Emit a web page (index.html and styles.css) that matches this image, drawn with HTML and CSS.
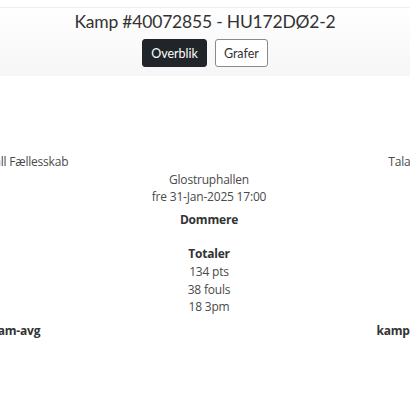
FILE: index.html
```html
<!DOCTYPE html>
<html lang="da">
<head>
    <meta charset="UTF-8">
    <meta name="viewport" content="width=device-width, initial-scale=1.0">
    <title>Kamp #40072855</title>
    <link rel="stylesheet" href="styles.css">
</head>
<body>
    <!-- Header -->
    <div class="header">
        <h1 class="title">Kamp #40072855 - HU172DØ2-2</h1>
        <div class="tabs">
            <button class="tab active">Overblik</button>
            <button class="tab">Grafer</button>
        </div>
    </div>

    <!-- Match info -->
    <div class="match">
        <div class="side">
            <span class="team">Handball Fællesskab</span>
        </div>
        <div class="center">
            <p class="line empty">&nbsp;</p>
            <p class="line">Glostruphallen</p>
            <p class="line">fre 31-Jan-2025 17:00</p>
            <p class="line bold referees">Dommere</p>
            <p class="line bold totals">Totaler</p>
            <p class="line">134 pts</p>
            <p class="line">38 fouls</p>
            <p class="line">18 3pm</p>
        </div>
        <div class="side">
            <span class="team">Talant</span>
        </div>

        <div class="side avg">
            <span class="bold">team-avg</span>
        </div>
        <div class="center"></div>
        <div class="side avg">
            <span class="bold">kamp-avg</span>
        </div>
    </div>
</body>
</html>
```

FILE: styles.css
```css
/* General Styling */
body {
    margin: 0;
    font-family: 'Open Sans', sans-serif;
    color: #4a4a4a;
    background-color: #fff;
    overflow: hidden;
}

/* Header */
.header {
    margin-top: 7px;
    border-top: 1px solid #efefef;
    height: 68px;
    background: linear-gradient(#fff, #f6f6f6);
    text-align: center;
}

.title {
    margin: 0;
    padding-top: 3px;
    font-family: 'Lato', sans-serif;
    font-size: 17.5px;
    font-weight: normal;
    color: #333;
    letter-spacing: -0.2px;
}

.tabs {
    display: flex;
    justify-content: center;
    gap: 8px;
    margin-top: 7px;
}

.tab {
    height: 28px;
    padding: 0 8px;
    font-family: 'Lato', sans-serif;
    font-size: 12.5px;
    color: #333;
    background-color: #fff;
    border: 1px solid #8a8a8a;
    border-radius: 3px;
}

.tab.active {
    background-color: #212529;
    border-color: #212529;
    color: #fff;
}

/* Match grid: wider than the window, sides run off the edges */
.match {
    display: grid;
    grid-template-columns: 200px 1fr 200px;
    width: 592px;
    margin-left: -87px;
    margin-top: 77px;
    font-size: 12px;
    letter-spacing: -0.2px;
    line-height: 17.6px;
}

.side {
    display: flex;
    justify-content: center;
    white-space: nowrap;
}

.side.avg {
    margin-top: 6px;
}

.center {
    text-align: center;
}

.line {
    margin: 0;
}

.bold {
    font-weight: bold;
    color: #333;
}

.referees {
    margin-top: 5px;
}

.totals {
    margin-top: 17px;
}
```
